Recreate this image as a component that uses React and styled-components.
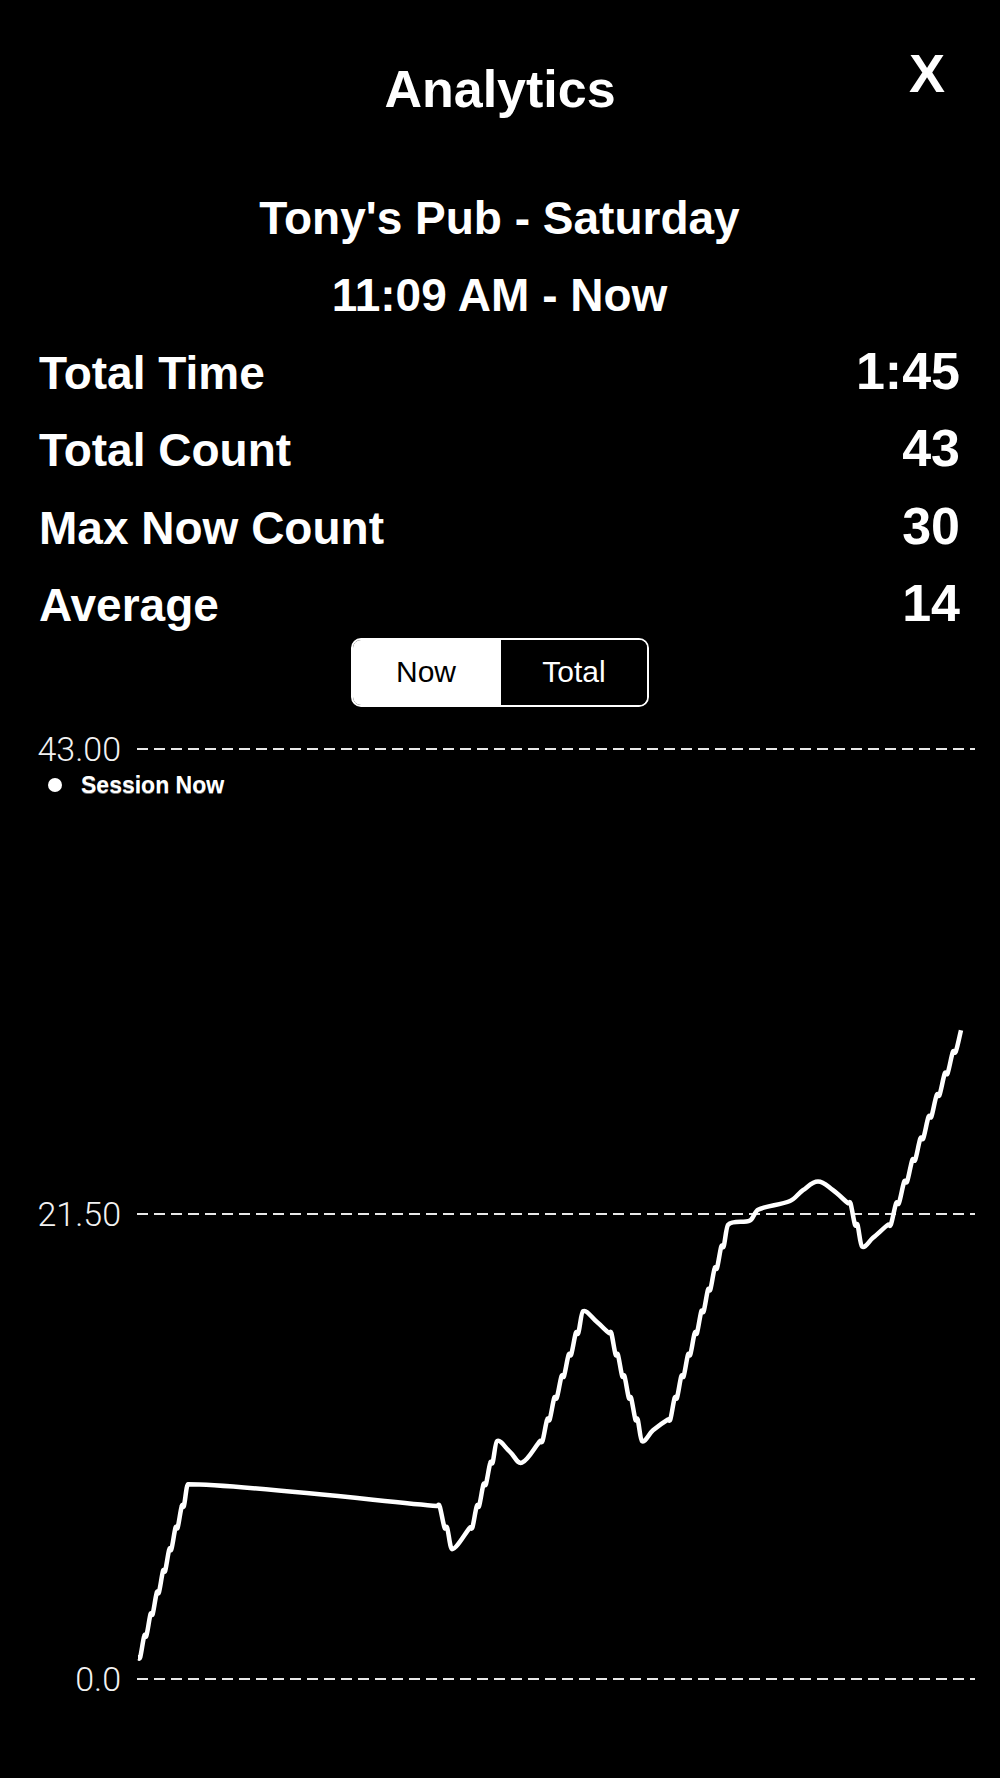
import styled, { createGlobalStyle } from "styled-components";
import { useState } from "react";

const GlobalStyle = createGlobalStyle`
  html, body {
    margin: 0;
    padding: 0;
    background: #000;
  }
  body {
    font-family: "Liberation Sans", Arial, Helvetica, sans-serif;
    color: #fff;
  }
`;

const stats = [
  { label: "Total Time", value: "1:45" },
  { label: "Total Count", value: "43" },
  { label: "Max Now Count", value: "30" },
  { label: "Average", value: "14" },
];

// chart geometry (page coordinates)
const TOP_Y = 749;
const ZERO_Y = 1679;
const MAX_V = 43;
const PLOT_LEFT = 137;
const PLOT_RIGHT = 975;
const vy = (v) => ZERO_Y - (v * (ZERO_Y - TOP_Y)) / MAX_V;

// turning points of the "now" count; runs of several counts are expanded to steps
const anchors = [
  [138, 1], [188, 9], [437, 8], [452, 6], [470, 7], [497, 11], [510, 10.5],
  [522, 10], [540, 11], [583, 17], [597, 16.5], [609, 16], [642, 11], [653, 11.5],
  [668, 12], [728, 21], [750, 21.2], [758, 21.7], [790, 22.1], [803, 22.6],
  [818, 23], [833, 22.6], [848, 22], [862, 20], [873, 20.4], [888, 21], [961, 30],
];

const buildPoints = () => {
  const pts = [[anchors[0][0], anchors[0][1]]];
  for (let i = 1; i < anchors.length; i++) {
    const [xa, va] = anchors[i - 1];
    const [xb, vb] = anchors[i];
    const n = Math.round(Math.abs(vb - va));
    if (n >= 2) {
      const s = Math.sign(vb - va);
      const dx = (xb - xa) / n;
      for (let k = 0; k < n; k++) {
        const x = xa + dx * k;
        const v = va + s * k;
        if (k > 0) pts.push([x, v]);
        pts.push([x + dx * 0.35, v]);
      }
    }
    pts.push([xb, vb]);
  }
  return pts.map(([x, v]) => [x, vy(v)]);
};

// cubic smoothing, tangents kept inside each segment so corners don't overshoot
const cubicPath = (pts, intensity = 0.2) => {
  const clamp = (tx, ty, limit) => {
    const f = Math.abs(tx) > limit && tx !== 0 ? limit / Math.abs(tx) : 1;
    return [tx * f, ty * f];
  };
  let d = `M${pts[0][0].toFixed(1)},${pts[0][1].toFixed(1)}`;
  for (let j = 1; j < pts.length; j++) {
    const pp = pts[Math.max(j - 2, 0)];
    const p = pts[j - 1];
    const c = pts[j];
    const n = pts[Math.min(j + 1, pts.length - 1)];
    const limit = (c[0] - p[0]) * 0.4;
    const [t1x, t1y] = clamp((c[0] - pp[0]) * intensity, (c[1] - pp[1]) * intensity, limit);
    const [t2x, t2y] = clamp((n[0] - p[0]) * intensity, (n[1] - p[1]) * intensity, limit);
    d += ` C${(p[0] + t1x).toFixed(1)},${(p[1] + t1y).toFixed(1)} ${(c[0] - t2x).toFixed(1)},${(c[1] - t2y).toFixed(1)} ${c[0].toFixed(1)},${c[1].toFixed(1)}`;
  }
  return d;
};

const gridLines = [
  { v: 43, label: "43.00" },
  { v: 21.5, label: "21.50" },
  { v: 0, label: "0.0" },
];

const App = () => {
  const [mode, setMode] = useState("now");
  const linePath = cubicPath(buildPoints());

  return (
    <Page>
      <GlobalStyle />
      <Header>
        <Title>Analytics</Title>
        <CloseButton aria-label="Close">X</CloseButton>
      </Header>

      <Info>
        <Heading>Tony's Pub - Saturday</Heading>
        <Heading>11:09 AM - Now</Heading>
        {stats.map((s) => (
          <StatRow key={s.label}>
            <span>{s.label}</span>
            <StatValue>{s.value}</StatValue>
          </StatRow>
        ))}
      </Info>

      <Segmented>
        <Segment $active={mode === "now"} onClick={() => setMode("now")}>Now</Segment>
        <Segment $active={mode === "total"} $divider onClick={() => setMode("total")}>Total</Segment>
      </Segmented>

      <Chart>
        <svg width="1000" height="1071" viewBox="0 707 1000 1071">
          {gridLines.map((g) => (
            <g key={g.label}>
              <line
                x1={PLOT_LEFT}
                x2={PLOT_RIGHT}
                y1={vy(g.v)}
                y2={vy(g.v)}
                stroke="#e8e8e8"
                strokeWidth="2"
                strokeDasharray="11 6"
              />
              <AxisText x="121" y={vy(g.v) + 12} textAnchor="end">
                {g.label}
              </AxisText>
            </g>
          ))}
          <path
            d={linePath}
            fill="none"
            stroke="#fff"
            strokeWidth="4.5"
            strokeLinejoin="round"
            strokeLinecap="butt"
          />
        </svg>
        <Legend>
          <LegendDot />
          <LegendLabel>Session Now</LegendLabel>
        </Legend>
      </Chart>
    </Page>
  );
};

export default App;

const Page = styled.div`
  width: 1000px;
  min-height: 1778px;
  background: #000;
  color: #fff;
`;

const Header = styled.header`
  position: relative;
  padding-top: 59px;
  text-align: center;
`;

const Title = styled.h1`
  margin: 0;
  font-size: 52px;
  line-height: 60px;
  font-weight: 700;
`;

const CloseButton = styled.button`
  position: absolute;
  top: 46px;
  right: 55px;
  padding: 0;
  border: none;
  background: transparent;
  color: #fff;
  font-family: inherit;
  font-size: 54px;
  line-height: 54px;
  font-weight: 700;
  cursor: pointer;
`;

const Info = styled.section`
  display: flex;
  flex-direction: column;
  gap: 21.4px;
  margin-top: 71px;
  padding: 0 40px 0 39px;
`;

const Heading = styled.div`
  font-size: 46px;
  line-height: 56px;
  font-weight: 700;
  text-align: center;
`;

const StatRow = styled.div`
  display: flex;
  justify-content: space-between;
  align-items: baseline;
  height: 56px;
  font-size: 46px;
  line-height: 56px;
  font-weight: 700;
`;

const StatValue = styled.span`
  font-size: 52px;
  line-height: 50px;
`;

const Segmented = styled.div`
  display: flex;
  box-sizing: border-box;
  width: 298px;
  height: 69px;
  margin: 5px auto 0;
  border: 2px solid #fff;
  border-radius: 10px;
  overflow: hidden;
`;

const Segment = styled.button`
  flex: 1;
  padding: 0;
  border: none;
  border-left: ${(p) => (p.$divider ? "2px solid #fff" : "none")};
  background: ${(p) => (p.$active ? "#fff" : "#000")};
  color: ${(p) => (p.$active ? "#000" : "#fff")};
  font-family: inherit;
  font-size: 30px;
  cursor: pointer;
`;

const Chart = styled.div`
  position: relative;
  height: 1071px;

  svg {
    display: block;
  }
`;

const AxisText = styled.text`
  font-family: Roboto, "Liberation Sans", sans-serif;
  font-weight: 300;
  font-size: 34px;
  fill: #f2f2f2;
`;

const Legend = styled.div`
  position: absolute;
  left: 48px;
  top: 65px;
  display: flex;
  align-items: center;
  gap: 19px;
`;

const LegendDot = styled.span`
  width: 14px;
  height: 14px;
  border-radius: 50%;
  background: #fff;
`;

const LegendLabel = styled.span`
  font-size: 23px;
  line-height: 26px;
  font-weight: 700;
  text-shadow: 0 1px 0 rgba(255, 255, 255, 0.45);
`;
